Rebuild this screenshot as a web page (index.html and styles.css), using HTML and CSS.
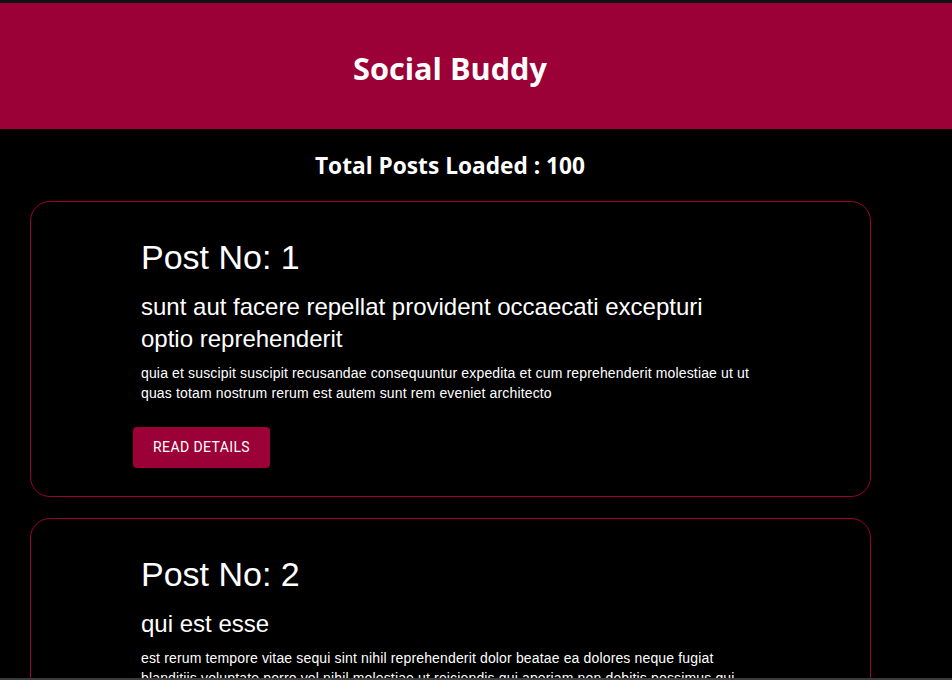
FILE: index.html
```html
<!DOCTYPE html>
<html lang="en">
<head>
<meta charset="utf-8">
<title>Social Buddy</title>
<link rel="stylesheet" href="styles.css">
</head>
<body>
<div class="topline"></div>
<header class="header">
  <div class="header-inner"><h1 class="brand">Social Buddy</h1></div>
</header>
<main class="main">
  <h2 class="total">Total Posts Loaded : 100</h2>
  <article class="card">
    <div class="inner">
      <h3 class="post-no">Post No: 1</h3>
      <h4 class="post-title">sunt aut facere repellat provident occaecati excepturi optio reprehenderit</h4>
      <p class="post-body">quia et suscipit suscipit recusandae consequuntur expedita et cum reprehenderit molestiae ut ut quas totam nostrum rerum est autem sunt rem eveniet architecto</p>
      <button class="btn">Read Details</button>
    </div>
  </article>
  <article class="card">
    <div class="inner">
      <h3 class="post-no">Post No: 2</h3>
      <h4 class="post-title">qui est esse</h4>
      <p class="post-body">est rerum tempore vitae sequi sint nihil reprehenderit dolor beatae ea dolores neque fugiat blanditiis voluptate porro vel nihil molestiae ut reiciendis qui aperiam non debitis possimus qui neque nisi nulla</p>
      <button class="btn">Read Details</button>
    </div>
  </article>
  <article class="card">
    <div class="inner">
      <h3 class="post-no">Post No: 3</h3>
      <h4 class="post-title">ea molestias quasi exercitationem repellat qui ipsa sit aut</h4>
      <p class="post-body">et iusto sed quo iure voluptatem occaecati omnis eligendi aut ad voluptatem doloribus vel accusantium quis pariatur molestiae porro eius odio et labore et velit aut</p>
      <button class="btn">Read Details</button>
    </div>
  </article>
</main>
<div class="bottomline"></div>
</body>
</html>
```

FILE: styles.css
```css
html, body {
  margin: 0;
  padding: 0;
  background: #000;
  color: #fff;
}
body {
  font-family: "Open Sans", "Noto Sans", sans-serif;
}
.topline {
  height: 3px;
  background: #111;
}
.header {
  background: #9b0036;
  height: 126px;
}
.header-inner {
  width: 900px;
  height: 100%;
  display: flex;
  align-items: center;
  justify-content: center;
}
.brand {
  margin: 0;
  font-size: 30.7px;
  font-weight: 700;
  line-height: 1;
  padding-top: 4px;
}
.main {
  width: 900px;
}
.total {
  margin: 22px 0 20px;
  text-align: center;
  font-size: 22.7px;
  line-height: 30px;
  font-weight: 700;
}
.card {
  border: 1px solid #9b0036;
  border-radius: 20px;
  margin: 0 29px 21px 30px;
  padding: 34px 0 28px;
}
.inner {
  margin-left: 102px;
  width: 640px;
  font-family: "Liberation Sans", Arial, sans-serif;
}
.post-no {
  margin: 0 0 0 8px;
  font-size: 34px;
  line-height: 42px;
  font-weight: 400;
}
.post-title {
  margin: 13px 0 0 8px;
  width: 616px;
  font-size: 24px;
  line-height: 32px;
  font-weight: 400;
}
.post-body {
  margin: 8px 0 0 8px;
  width: 616px;
  font-size: 14px;
  line-height: 20px;
  letter-spacing: 0.15px;
}
.btn {
  margin-top: 24px;
  display: inline-block;
  background: #9b0036;
  color: #fff;
  border: none;
  border-radius: 4px;
  padding: 8px 20px;
  font-family: Roboto, sans-serif;
  font-size: 14px;
  font-weight: 400;
  letter-spacing: 0.4px;
  line-height: 25px;
  text-transform: uppercase;
}
.bottomline {
  position: fixed;
  left: 0;
  right: 0;
  bottom: 0;
  height: 2px;
  background: #3b3b3b;
}
```
